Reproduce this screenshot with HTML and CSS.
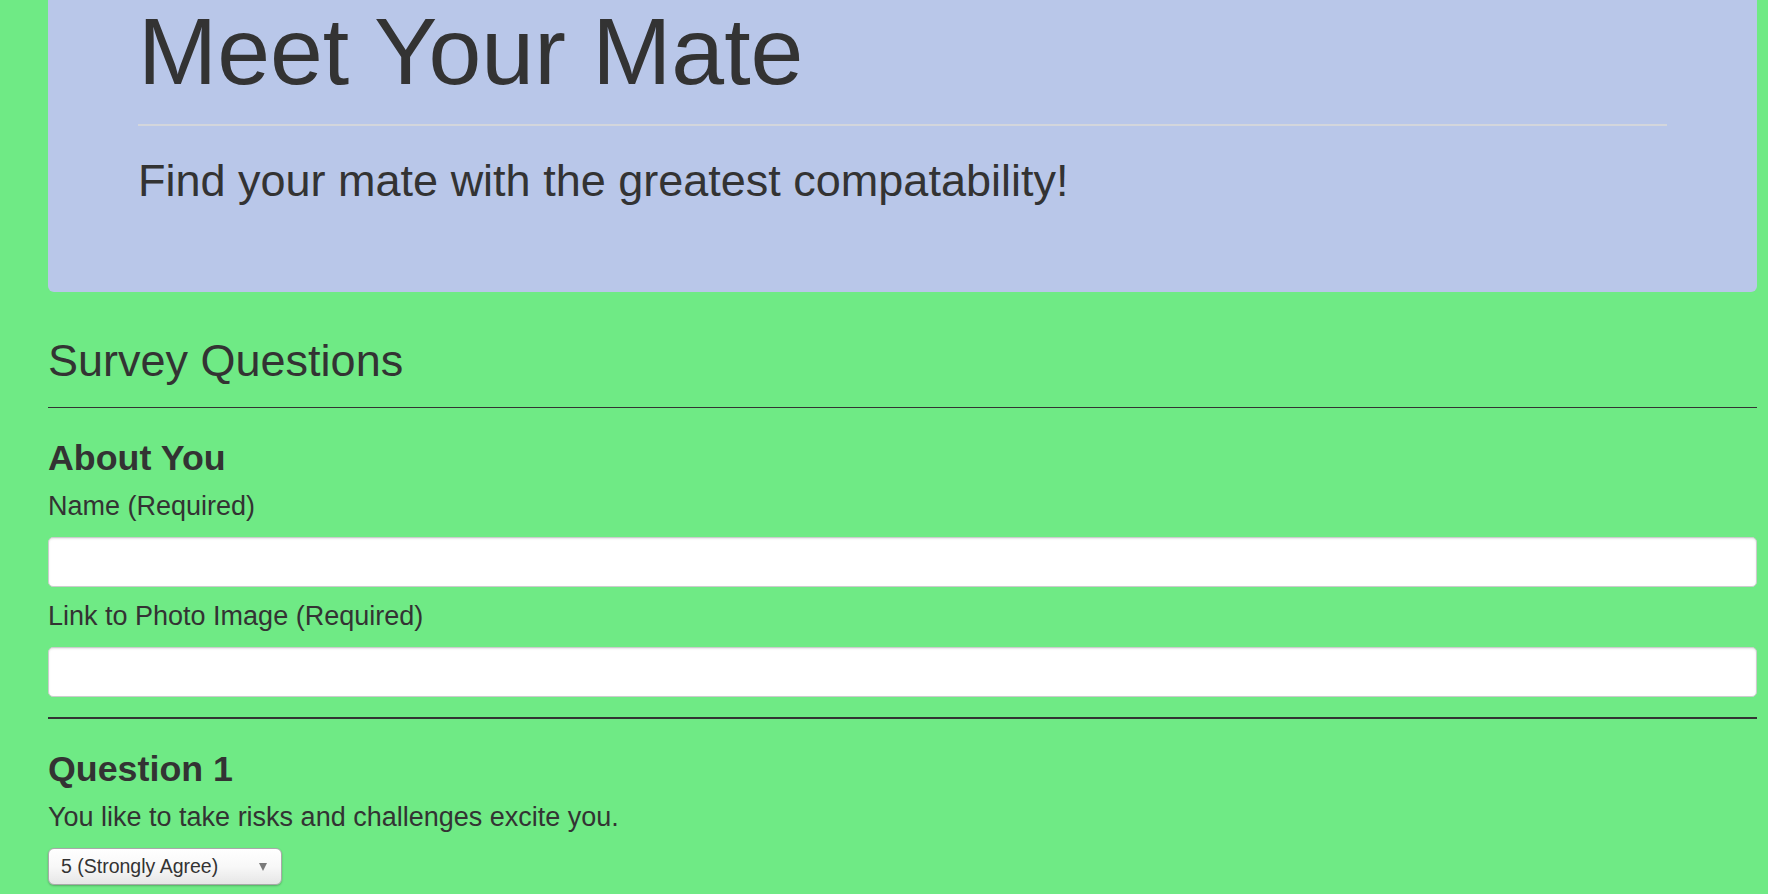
FILE: index.html
```html
<!DOCTYPE html>
<html lang="en">
<head>
<meta charset="utf-8">
<title>Meet Your Mate</title>
<link rel="stylesheet" href="styles.css">
</head>
<body>
<div class="page">
  <header class="jumbotron">
    <h1 class="title">Meet Your Mate</h1>
    <hr class="jumbo-rule">
    <p class="lead">Find your mate with the greatest compatability!</p>
  </header>

  <main class="survey">
    <h2 class="survey-title">Survey Questions</h2>
    <hr class="thin-rule">

    <section class="block">
      <h3 class="block-title">About You</h3>
      <label class="field-label" for="name">Name (Required)</label>
      <input class="text-input" id="name" type="text">
      <label class="field-label" for="photo">Link to Photo Image (Required)</label>
      <input class="text-input" id="photo" type="text">
    </section>

    <hr class="thick-rule">

    <section class="block">
      <h3 class="block-title q-title">Question 1</h3>
      <p class="field-label">You like to take risks and challenges excite you.</p>
      <span class="select-wrap">
        <select class="select">
          <option>5 (Strongly Agree)</option>
          <option>4</option>
          <option>3</option>
          <option>2</option>
          <option>1 (Strongly Disagree)</option>
        </select>
      </span>
    </section>
  </main>
</div>
</body>
</html>
```

FILE: styles.css
```css
* { box-sizing: border-box; }

html, body {
  margin: 0;
  padding: 0;
  height: 100%;
  overflow: hidden;
}

body {
  background: #6fea85;
  color: #333333;
  font-family: "Liberation Sans", Arial, Helvetica, sans-serif;
}

.page {
  padding: 0 11px 0 48px;
}

.jumbotron {
  background: #b9c7e9;
  border-radius: 0 0 6px 6px;
  padding: 0 90px 80px 90px;
}

.title {
  margin: 0;
  font-size: 95px;
  line-height: 104px;
  font-weight: 400;
  transform: translateY(-1px);
}

.jumbo-rule {
  margin: 20px 0 0 0;
  border: 0;
  height: 2px;
  background: #d3d6dc;
}

.lead {
  margin: 23px 0 0 0;
  font-size: 45px;
  line-height: 63px;
  font-weight: 400;
}

.survey {
  padding-top: 44px;
}

.survey-title {
  margin: 0;
  font-size: 45px;
  line-height: 50px;
  font-weight: 400;
}

.thin-rule {
  margin: 21px 0 0 0;
  border: 0;
  height: 1px;
  background: #333333;
}

.block {
  display: flex;
  flex-direction: column;
  align-items: flex-start;
  padding-top: 30px;
}

.block-title {
  margin: 0 0 13px 0;
  font-size: 35.8px;
  line-height: 40px;
  font-weight: 700;
}

.field-label {
  display: block;
  margin: 0 0 15.5px 0;
  font-size: 27px;
  line-height: 30px;
}

.text-input {
  display: block;
  width: 100%;
  height: 50px;
  margin: 0 0 14.5px 0;
  background: #ffffff;
  border: 1px solid #cccccc;
  border-radius: 5px;
  box-shadow: inset 0 1px 2px rgba(0, 0, 0, 0.1);
  font-size: 20px;
  outline: none;
}

.thick-rule {
  margin: 6px 0 0 0;
  border: 0;
  height: 2px;
  background: #333333;
}

.select-wrap {
  position: relative;
  display: inline-block;
}

.select-wrap::after {
  content: "";
  position: absolute;
  right: 15px;
  top: 15px;
  border-left: 4.5px solid transparent;
  border-right: 4.5px solid transparent;
  border-top: 8px solid #7a7a7a;
  pointer-events: none;
}

.select {
  -webkit-appearance: none;
  appearance: none;
  display: block;
  width: 234px;
  height: 37px;
  padding: 0 0 0 12px;
  border: 1px solid #a9a9a9;
  border-radius: 6px;
  background: linear-gradient(#ffffff 0%, #f8f8f8 50%, #e6e6e6 100%);
  box-shadow: 0 1px 2px rgba(0, 0, 0, 0.25);
  color: #333333;
  font-family: "Liberation Sans", Arial, Helvetica, sans-serif;
  font-size: 19.5px;
  line-height: 35px;
  outline: none;
}
```
